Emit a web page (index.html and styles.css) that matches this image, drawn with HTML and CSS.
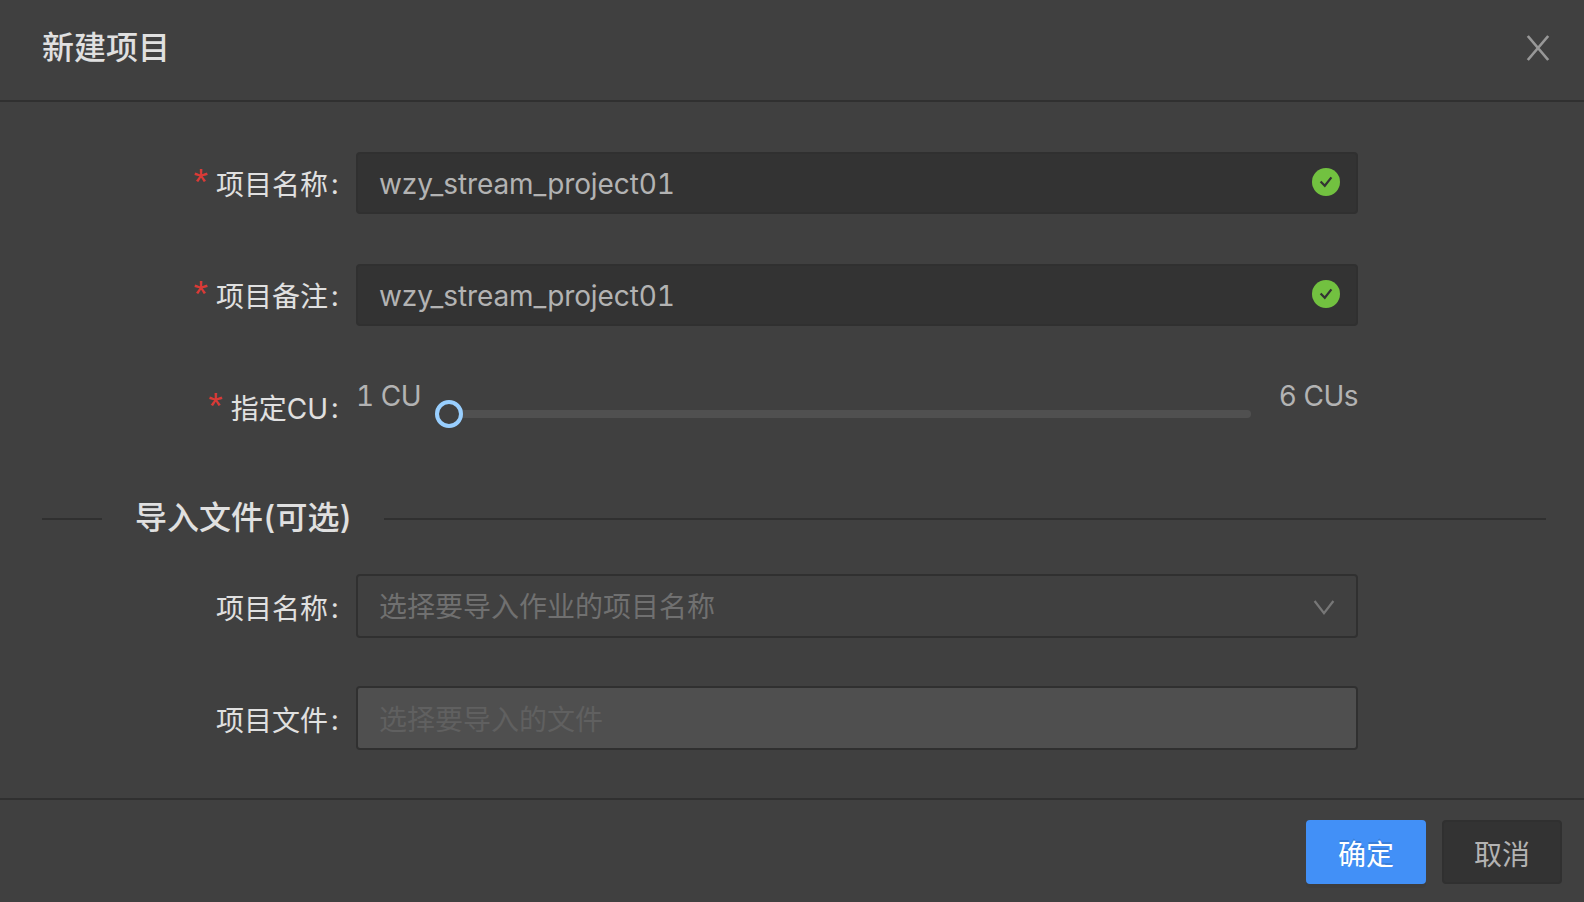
FILE: index.html
```html
<!DOCTYPE html>
<html lang="zh-CN">
<head>
<meta charset="utf-8">
<title>新建项目</title>
<link rel="stylesheet" href="styles.css">
</head>
<body>
<div class="modal">
  <header class="modal-header">
    <h1 class="heading">新建项目</h1>
    <svg class="close" width="24" height="26" viewBox="0 0 24 26"><path d="M1.8 1L22.2 25M22.2 1L1.8 25"/></svg>
  </header>
  <main class="modal-body">
    <div class="row">
      <div class="label"><span class="required">*</span><span class="label-text">项目名称</span><span class="colon">:</span></div>
      <div class="field filled"><span class="value">wzy_stream_project01</span>
        <svg class="ok" width="28" height="28" viewBox="0 0 28 28"><circle cx="14" cy="14" r="14"/><path d="M8.6 13.4L12.8 17.8L19.4 9.4"/></svg>
      </div>
    </div>
    <div class="row">
      <div class="label"><span class="required">*</span><span class="label-text">项目备注</span><span class="colon">:</span></div>
      <div class="field filled"><span class="value">wzy_stream_project01</span>
        <svg class="ok" width="28" height="28" viewBox="0 0 28 28"><circle cx="14" cy="14" r="14"/><path d="M8.6 13.4L12.8 17.8L19.4 9.4"/></svg>
      </div>
    </div>
    <div class="row">
      <div class="label"><span class="required">*</span><span class="label-text">指定CU</span><span class="colon">:</span></div>
      <div class="slider">
        <span class="slider-text">1 CU</span>
        <div class="rail"><span class="handle"></span></div>
        <span class="slider-text">6 CUs</span>
      </div>
    </div>
    <div class="divider"><h2 class="heading">导入文件(可选)</h2></div>
    <div class="row import">
      <div class="label"><span class="label-text">项目名称</span><span class="colon">:</span></div>
      <div class="field select"><span class="placeholder">选择要导入作业的项目名称</span>
        <svg class="arrow" width="22" height="16" viewBox="0 0 22 16"><path d="M1.6 1L11 13.2L20.4 1"/></svg>
      </div>
    </div>
    <div class="row import">
      <div class="label"><span class="label-text">项目文件</span><span class="colon">:</span></div>
      <div class="field disabled"><span class="placeholder">选择要导入的文件</span></div>
    </div>
  </main>
  <footer class="modal-footer">
    <button class="btn primary">确定</button>
    <button class="btn">取消</button>
  </footer>
</div>
</body>
</html>
```
FILE: styles.css
```css
* { box-sizing: border-box; }
body {
  margin: 0;
  background: #404040;
  color: #e0e0e0;
  font: 28px/40px Inter, "Noto Sans CJK SC", sans-serif;
  font-variant-numeric: tabular-nums;
}
.modal { display: flex; flex-direction: column; height: 902px; }
.modal-header {
  display: flex;
  align-items: center;
  justify-content: space-between;
  height: 102px;
  padding: 0 34px 4px 42px;
  border-bottom: 2px solid #303030;
}
.heading {
  margin: 0;
  font-size: 32px;
  font-weight: 500;
  line-height: 44px;
}
.close { fill: none; stroke: #989898; stroke-width: 2.7; }
.modal-body {
  display: flex;
  flex-direction: column;
  gap: 50px;
  height: 696px;
  padding-top: 50px;
}
.row {
  display: grid;
  grid-template-columns: 340px 1002px;
  column-gap: 16px;
  height: 62px;
}
.label { display: flex; justify-content: flex-end; align-items: center; padding-top: 3px; }
.import .label { padding-top: 6px; }
.required {
  margin-right: 8px;
  padding-bottom: 4px;
  color: #d93a36;
  font-family: "Liberation Sans", sans-serif;
  font-size: 37px;
}
.colon { width: 9px; margin-left: 3px; padding-bottom: 2px; }
.field {
  display: flex;
  align-items: center;
  justify-content: space-between;
  height: 62px;
  padding: 0 16px 0 21px;
  border: 2px solid #303030;
  border-radius: 4px;
}
.filled { background: #333; color: #b3b3b3; }
.value { padding-top: 2px; letter-spacing: -0.1px; }
.ok { margin-top: -2px; }
.ok circle { fill: #72c140; }
.ok path { fill: none; stroke: #333; stroke-width: 2.2; }
.slider { display: flex; justify-content: space-between; color: #b3b3b3; }
.slider-text { letter-spacing: -0.5px; }
.rail {
  position: relative;
  width: 802px;
  height: 8px;
  margin-top: 34px;
  border-radius: 4px;
  background: #505050;
}
.handle {
  position: absolute;
  left: -14px;
  top: -10px;
  width: 28px;
  height: 28px;
  border: 4px solid #99cfff;
  border-radius: 50%;
  background: #404040;
}
.divider {
  display: flex;
  align-items: center;
  gap: 32px;
  height: 44px;
  margin: 9px 38px -17px 42px;
}
.divider .heading { padding: 0 0 2px 1px; }
.divider::before, .divider::after { content: ""; height: 2px; background: #303030; }
.divider::before { width: 60px; }
.divider::after { flex: 1; }
.select, .disabled { height: 64px; }
.select { padding-right: 21px; }
.placeholder { padding-top: 2px; }
.select .placeholder { color: #707070; }
.arrow { margin-top: 4px; fill: none; stroke: #777; stroke-width: 2.2; }
.disabled { background: #4f4f4f; }
.disabled .placeholder { padding-top: 4px; color: #606060; }
.modal-footer {
  display: flex;
  justify-content: flex-end;
  gap: 16px;
  height: 104px;
  padding: 20px 22px 0 0;
  border-top: 2px solid #303030;
}
.btn {
  width: 120px;
  height: 64px;
  padding: 5px 0 0;
  border: 2px solid #303030;
  border-radius: 4px;
  background: #333;
  color: #b3b3b3;
  font: inherit;
}
.primary {
  border-color: #4290f7;
  background: #4290f7;
  color: #fff;
  text-shadow: 0 -2px 0 rgba(0, 0, 0, .12);
  box-shadow: 0 4px 0 rgba(0, 0, 0, .045);
}
```
